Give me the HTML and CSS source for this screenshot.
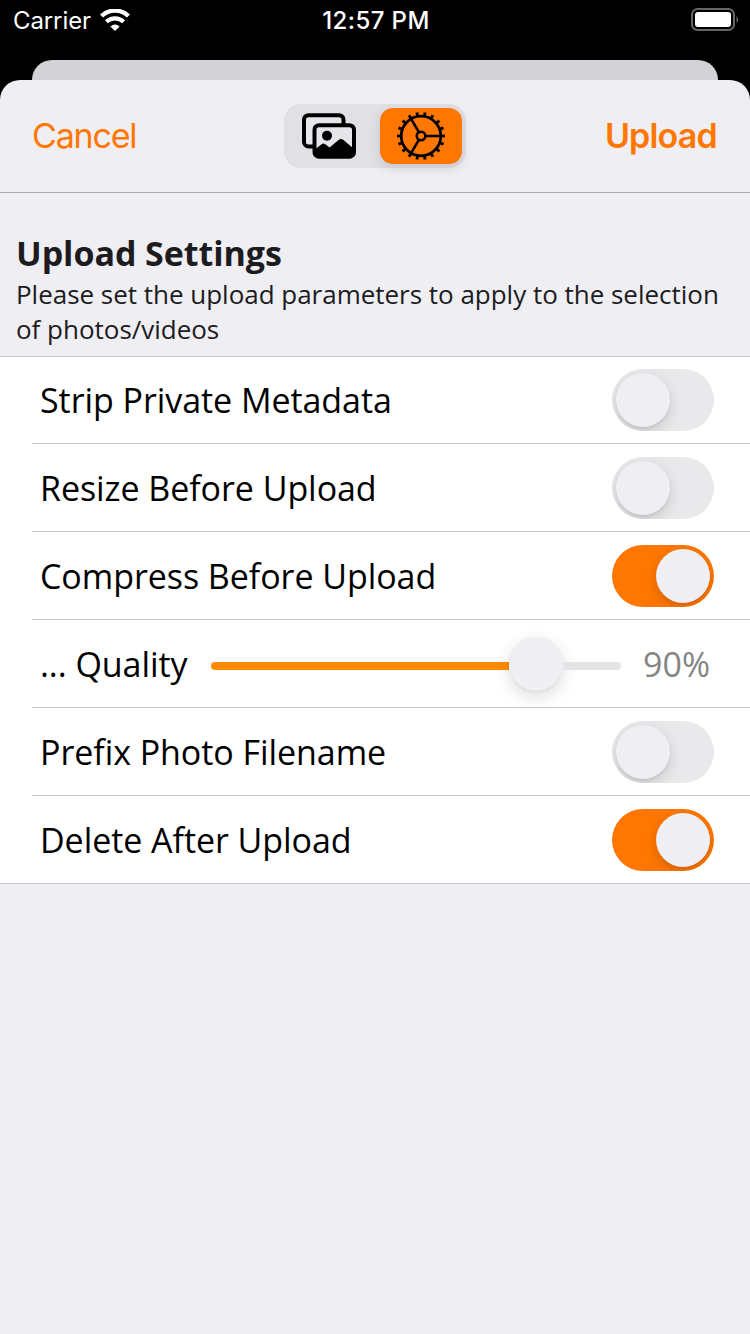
FILE: index.html
```
<!DOCTYPE html>
<html lang="en">
<head>
<meta charset="utf-8">
<title>Upload Settings</title>
<link rel="stylesheet" href="styles.css">
</head>
<body>
<div class="status">
  <div class="carrier"><span>Carrier</span>
    <svg class="wifi" width="30" height="22" viewBox="0 0 30 22" fill="none" stroke="#fff">
      <path d="M1.500 7A19.500 19.500 0 0 1 28.500 7" stroke-width="4.400"/>
      <path d="M6.400 12.800A12.700 12.700 0 0 1 23.600 12.800" stroke-width="4.200"/>
      <path d="M10.400 17.600Q15 13.600 19.600 17.600L15 22Z" fill="#fff" stroke="none"/>
    </svg>
  </div>
  <span class="clock">12:57 PM</span>
  <svg class="battery" width="48" height="24" viewBox="0 0 48 24">
    <rect x="1" y="1" width="42" height="21" rx="5.5" fill="none" stroke="#666" stroke-width="2"/>
    <rect x="4" y="4" width="36" height="15" rx="3" fill="#fff"/>
    <path d="M45.6 8Q48.6 11.5 45.6 15Z" fill="#747474"/>
  </svg>
</div>
<div class="back-sheet"></div>
<main class="sheet">
  <header class="nav">
    <span class="cancel">Cancel</span>
    <div class="segments">
      <div class="segment">
        <svg width="54" height="46" viewBox="0 0 54 46">
          <rect x="2" y="2.200" width="39.500" height="31.300" rx="4.500" fill="#e6e5ea" stroke="#000" stroke-width="4"/>
          <rect x="12.500" y="12.200" width="39.500" height="31.500" rx="4.500" fill="#e6e5ea" stroke="#000" stroke-width="4"/>
          <circle cx="25" cy="22.700" r="5" fill="#000"/>
          <path d="M12 37L20 31Q21.500 30 23 31L27.500 34.500L36.500 27Q39 25 41.500 27L52 36V40Q52 44 48 44H16Q12 44 12 40Z" fill="#000"/>
        </svg>
      </div>
      <div class="segment active">
        <svg width="48" height="48" viewBox="0 0 48 48" fill="none" stroke="#000">
          <circle cx="24" cy="24" r="19.800" stroke-width="2.800"/>
          <circle cx="24" cy="24" r="22.200" stroke-width="3.600" pathLength="180" stroke-dasharray="3.600 6.400" stroke-dashoffset="1.800"/>
          <circle cx="24" cy="24" r="4.300" stroke-width="2.500"/>
          <path d="M28.300 24H44M21.800 20.200L14 6.700M21.800 27.800L14 41.300" stroke-width="2.600"/>
        </svg>
      </div>
    </div>
    <span class="upload">Upload</span>
  </header>
  <section class="intro">
    <h1 class="title">Upload Settings</h1>
    <p class="description">Please set the upload parameters to apply to the selection<br>of photos/videos</p>
  </section>
  <section class="list">
    <div class="row"><span class="label">Strip Private Metadata</span><div class="toggle"><i class="knob"></i></div></div>
    <div class="row"><span class="label">Resize Before Upload</span><div class="toggle"><i class="knob"></i></div></div>
    <div class="row"><span class="label">Compress Before Upload</span><div class="toggle on"><i class="knob"></i></div></div>
    <div class="row"><span class="label quality">... Quality</span><div class="slider"><i class="filled"></i><i class="knob"></i><i class="rest"></i></div><span class="value">90%</span></div>
    <div class="row"><span class="label">Prefix Photo Filename</span><div class="toggle"><i class="knob"></i></div></div>
    <div class="row"><span class="label">Delete After Upload</span><div class="toggle on"><i class="knob"></i></div></div>
  </section>
</main>
</body>
</html>
```
FILE: styles.css
```
* { box-sizing: border-box; }
body { margin: 0; width: 750px; height: 1334px; overflow: hidden; display: flex; flex-direction: column; background: #000; font-family: "Open Sans", sans-serif; }
.status { height: 60px; flex: none; display: grid; grid-template-columns: 1fr auto 1fr; align-items: start; padding: 0 11px 0 13px; color: #fff; font: 24px/42px Inter, sans-serif; }
.carrier { display: flex; gap: 9px; letter-spacing: -.1px; }
.wifi { margin-top: 9px; }
.clock { font-weight: 500; letter-spacing: .4px; }
.battery { justify-self: end; margin-top: 8px; }
.back-sheet { height: 20px; flex: none; margin: 0 32px; border-radius: 20px 20px 0 0; background: #d3d2d7; }
.sheet { flex: 1; background: #efeef3; border-radius: 20px 20px 0 0; }
.nav { height: 113px; display: grid; grid-template-columns: 1fr 182px 1fr; align-items: center; padding: 0 33px 0 32px; border-bottom: 1px solid #a9a8ad; color: #ff7700; font: 34px/40px Inter, sans-serif; }
.cancel { padding-bottom: 1px; letter-spacing: -1.2px; }
.upload { justify-self: end; padding-bottom: 1px; font-weight: 600; letter-spacing: -.8px; }
.segments { height: 64px; display: flex; justify-content: space-between; padding: 4px; border-radius: 17px; background: #e1e0e5; }
.nav .segments { margin: 0 -.5px 0 .5px; }
.segment { width: 82px; display: flex; align-items: center; justify-content: center; border-radius: 13px; }
.active { background: #ff7700; box-shadow: 0 4px 12px rgba(0,0,0,.12); }
.intro { height: 163px; padding: 38px 16px 0; color: #1c1c1e; }
.title { margin: 0; font-size: 34px; line-height: 44px; font-weight: 700; letter-spacing: -.06px; }
.description { margin: 2px 0 0; font-size: 26px; line-height: 35px; letter-spacing: -.02px; white-space: nowrap; }
.list { background: #fff; border-bottom: 1px solid #c6c5c9; box-shadow: inset 0 1px #c6c5c9; }
.row { height: 88px; display: flex; align-items: center; margin-left: 32px; padding: 0 36px 0 8px; border-bottom: 1px solid #c6c5c9; }
.row:last-child { height: 87px; border: 0; }
.label { padding-top: 1px; font-size: 34px; line-height: 46px; letter-spacing: -.06px; white-space: nowrap; color: #000; }
.toggle { width: 102px; height: 62px; flex: none; margin-left: auto; padding: 4px; display: flex; border-radius: 31px; background: #e9e9eb; overflow: hidden; }
.toggle.on { background: #ff7700; justify-content: flex-end; }
.knob { width: 54px; height: 54px; flex: none; border-radius: 50%; background: #efeef3; box-shadow: 0 5px 14px rgba(0,0,0,.15), 0 2px 2px rgba(0,0,0,.05); }
.slider { width: 410px; flex: none; margin-left: 24px; display: flex; align-items: center; }
.filled { width: 298px; height: 8px; margin-top: 4px; border-radius: 4px 0 0 4px; background: #ff8c00; }
.slider .knob { box-shadow: 0 6px 18px rgba(0,0,0,.14), 0 1px 3px rgba(0,0,0,.06); }
.rest { flex: 1; height: 8px; margin-top: 4px; border-radius: 0 4px 4px 0; background: #e4e4e6; }
.quality { width: 147px; }
.value { margin-left: 22px; padding-top: 1px; font-size: 34px; line-height: 46px; color: #858585; }
```
